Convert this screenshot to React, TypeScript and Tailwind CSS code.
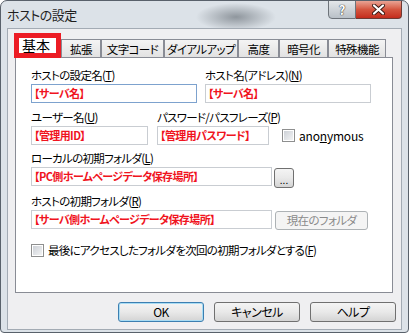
import React from 'react';

function Field({ w, text, focused }: { w: string; text: string; focused?: boolean }) {
  return (
    <div
      className={
        'h-[19px] bg-white border flex items-center pl-[2px] overflow-hidden whitespace-nowrap text-[11px] font-bold tracking-[-0.6px] text-[#f0141e] ' +
        w +
        (focused ? ' border-[#7da2ce]' : ' border-[#c9cdd2]')
      }
    >
      {text}
    </div>
  );
}

function CheckBox() {
  return (
    <div className="w-[13px] h-[13px] border border-[#8e8f8f] bg-white p-[1px] shrink-0">
      <div className="w-full h-full bg-gradient-to-br from-[#cdd1d7] to-[#f2f3f4]" />
    </div>
  );
}

function Label({ children }: { children: React.ReactNode }) {
  return <div className="text-[11.5px] leading-[15px] tracking-[-0.7px] whitespace-nowrap">{children}</div>;
}

function Button({ children, primary }: { children: React.ReactNode; primary?: boolean }) {
  return (
    <div
      className={
        'w-[86px] h-[20px] rounded-[3px] border flex items-center justify-center text-[12px] tracking-[-0.5px] bg-gradient-to-b from-[#f4f4f4] via-[#e9e9e9] to-[#d4d4d4] ' +
        (primary ? 'border-[#3c7fb1] shadow-[inset_0_0_0_1px_#a8dcf4]' : 'border-[#707070]')
      }
    >
      {children}
    </div>
  );
}

const tabs = [
  { label: '拡張', w: 'w-[40px]' },
  { label: '文字コード', w: 'w-[63px]' },
  { label: 'ダイアルアップ', w: 'w-[74px]' },
  { label: '高度', w: 'w-[41px]' },
  { label: '暗号化', w: 'w-[49px]' },
  { label: '特殊機能', w: 'w-[58px]' },
];

export default function App() {
  return (
    <div className="w-[409px] h-[336px] bg-white text-black font-['Noto_Sans_CJK_JP','Liberation_Sans',sans-serif] [font-feature-settings:'palt']">
      <div className="relative w-[409px] h-[333px] flex flex-col rounded-t-[7px] rounded-b-[4px] border border-[#59616b] bg-[#dce2e8] overflow-hidden">
        {/* Title bar */}
        <div className="h-[27px] flex items-start pl-[6px] pt-[5px] bg-[radial-gradient(ellipse_40px_14px_at_235px_16px,#8f969d,transparent)]">
          <span className="text-[13px] leading-[17px] tracking-[-0.5px] text-[#1e1e1e]">ホストの設定</span>
        </div>
        <div className="absolute top-[-1px] right-[6px] flex">
          <div className="w-[28px] h-[19px] rounded-bl-[4px] border border-[#6d737a] bg-gradient-to-b from-[#e4e7ea] to-[#b9c0c7] flex items-center justify-center text-white font-bold text-[13px] [text-shadow:0_0_1px_#222,0_0_1px_#222]">
            ?
          </div>
          <div className="w-[46px] h-[19px] rounded-br-[4px] border border-l-0 border-[#6d3a34] bg-gradient-to-b from-[#e8a394] via-[#d4553f] to-[#c42b1c] flex items-center justify-center">
            <svg width="13" height="11" viewBox="0 0 13 11">
              <path d="M2 1.5 L11 9.5 M11 1.5 L2 9.5" stroke="#3a1a14" strokeWidth="4" strokeLinecap="round" />
              <path d="M2 1.5 L11 9.5 M11 1.5 L2 9.5" stroke="white" strokeWidth="2.2" strokeLinecap="round" />
            </svg>
          </div>
        </div>

        {/* Client area */}
        <div className="ml-[6px] mr-[6px] mb-[2px] flex-1 border border-[#a3abb4] bg-[#efeff1] flex flex-col">
          {/* Tabs */}
          <div className="h-[28px] pt-[4px] pl-[6px] flex items-end">
            <div className="relative z-10 w-[47px] h-[25px] -mb-[1px] border-[5px] border-[#ec1c24] bg-white flex items-center pl-[3px] text-[14px] leading-[15px]">
              基本
            </div>
            {tabs.map(t => (
              <div
                key={t.label}
                className={
                  'h-[18px] border border-b-0 border-[#898c95] bg-gradient-to-b from-[#f4f4f4] to-[#e2e2e2] flex items-center justify-center text-[11.5px] leading-[14px] tracking-[-0.6px] whitespace-nowrap ' +
                  t.w
                }
              >
                {t.label}
              </div>
            ))}
          </div>

          {/* Panel */}
          <div className="ml-[7px] w-[378px] h-[236px] bg-white border border-[#898c95] pl-[15px] pt-[10px] flex flex-col">
            <div className="flex gap-[8px]">
              <div className="w-[166px] shrink-0 flex flex-col gap-[1px]">
                <Label>
                  ホストの設定名(<span className="underline">T</span>)
                </Label>
                <Field w="w-[166px]" text="【サーバ名】" focused />
              </div>
              <div className="w-[166px] shrink-0 flex flex-col gap-[1px]">
                <Label>
                  ホスト名(アドレス)(<span className="underline">N</span>)
                </Label>
                <Field w="w-[166px]" text="【サーバ名】" />
              </div>
            </div>

            <div className="flex items-end mt-[7px]">
              <div className="w-[117px] shrink-0 flex flex-col gap-[1px]">
                <Label>
                  ユーザー名(<span className="underline">U</span>)
                </Label>
                <Field w="w-[117px]" text="【管理用ID】" />
              </div>
              <div className="w-[112px] shrink-0 flex flex-col gap-[1px] ml-[9px]">
                <Label>
                  パスワード/パスフレーズ(<span className="underline">P</span>)
                </Label>
                <Field w="w-[112px]" text="【管理用パスワード】" />
              </div>
              <div className="flex items-center ml-[13px] h-[19px]">
                <CheckBox />
                <span className="ml-[4px] text-[12px] leading-[15px] tracking-[-0.2px]">
                  ano<span className="underline">n</span>ymous
                </span>
              </div>
            </div>

            <div className="flex flex-col gap-[1px] mt-[6px]">
              <Label>
                ローカルの初期フォルダ(<span className="underline">L</span>)
              </Label>
              <div className="flex items-start">
                <Field w="w-[241px]" text="【PC側ホームページデータ保存場所】" />
                <div className="ml-[2px] mt-[1px] w-[20px] h-[20px] rounded-[3px] border border-[#707070] bg-gradient-to-b from-[#f4f4f4] via-[#e9e9e9] to-[#d4d4d4] flex items-end justify-center text-[10px] leading-[14px]">
                  ...
                </div>
              </div>
            </div>

            <div className="flex flex-col gap-[1px] mt-[6px]">
              <Label>
                ホストの初期フォルダ(<span className="underline">R</span>)
              </Label>
              <div className="flex items-start">
                <Field w="w-[241px]" text="【サーバ側ホームページデータ保存場所】" />
                <div className="ml-[3px] mt-[1px] w-[93px] h-[19px] rounded-[3px] border border-[#adb2b5] bg-[#f4f4f4] flex items-center justify-center text-[11.5px] tracking-[-0.6px] text-[#8a8a8a]">
                  現在のフォルダ
                </div>
              </div>
            </div>

            <div className="flex items-center mt-[13px]">
              <CheckBox />
              <span className="ml-[4px] text-[11.5px] leading-[15px] tracking-[-0.7px]">
                最後にアクセスしたフォルダを次回の初期フォルダとする(<span className="underline">F</span>)
              </span>
            </div>
          </div>

          {/* Dialog buttons */}
          <div className="mt-[9px] ml-[110px] flex gap-[10px]">
            <Button primary>OK</Button>
            <Button>キャンセル</Button>
            <Button>ヘルプ</Button>
          </div>
        </div>
      </div>
    </div>
  );
}
